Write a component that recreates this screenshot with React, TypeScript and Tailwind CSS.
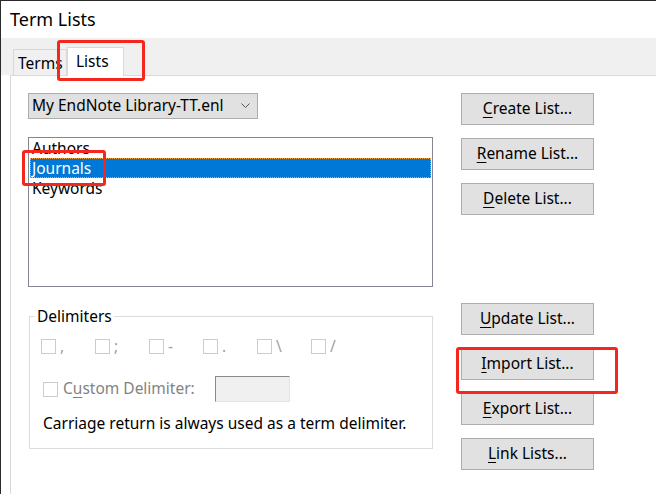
import React from "react";

const delimiters = [",", ";", "-", ".", "\\", "/"];

const topButtons = [
  { key: "C", rest: "reate List..." },
  { key: "R", rest: "ename List..." },
  { key: "D", rest: "elete List..." },
];

const bottomButtons = [
  { key: "U", rest: "pdate List..." },
  { key: "I", rest: "mport List..." },
  { key: "E", rest: "xport List..." },
  { key: "L", rest: "ink Lists..." },
];

function WinButton({ label }: { label: { key: string; rest: string } }) {
  return (
    <button className="w-[133px] h-[32px] bg-[#e1e1e1] border border-[#adadad] flex items-center justify-center text-[15.5px] text-black leading-none">
      <span>
        <u className="underline-offset-[3px]">{label.key}</u>
        {label.rest}
      </span>
    </button>
  );
}

function Checkbox() {
  return <div className="w-[15px] h-[15px] border border-[#cccccc] bg-white shrink-0" />;
}

export default function App() {
  return (
    <div className="relative w-[656px] h-[494px] overflow-hidden bg-white border-t border-l border-[#2b2b2b] flex flex-col font-['Noto_Sans',sans-serif] text-black">
      {/* Title bar */}
      <div className="h-[37px] flex items-center pl-[9px] text-[18px] shrink-0">Term Lists</div>

      {/* Tab strip */}
      <div className="h-[37px] bg-[#f0f0f0] flex items-end pl-[12px] shrink-0">
        <div className="w-[54px] h-[26px] overflow-hidden whitespace-nowrap border border-b-0 border-[#d9d9d9] bg-[#f0f0f0] pl-[4px] pt-[2px] text-[15.5px] flex items-center">
          Terms
        </div>
        <div className="relative z-10 -mb-px w-[57px] h-[29px] border border-b-0 border-[#d9d9d9] bg-white pl-[8px] text-[15.5px] flex items-center">
          Lists
        </div>
      </div>

      {/* Tab panel */}
      <div className="flex-1 ml-[9px] border-t border-l border-[#d9d9d9] flex pl-[17px] pt-[17px]">
        {/* Left column */}
        <div className="w-[405px] flex flex-col">
          <div className="w-[230px] h-[26px] bg-[#e1e1e1] border border-[#adadad] flex items-center pl-[3px] pr-[7px] text-[15.5px]">
            <span className="flex-1">My EndNote Library-TT.enl</span>
            <svg width="9" height="6" viewBox="0 0 9 6">
              <polyline points="0.5,0.5 4.5,4.5 8.5,0.5" fill="none" stroke="#555" strokeWidth="1" />
            </svg>
          </div>

          <div className="mt-[18px] h-[150px] border border-[#828790] px-px text-[15.5px] leading-[20px]">
            <div className="h-[20px] pl-[2px]">Authors</div>
            <div className="h-[20px] pl-[1px] bg-[#0078d7] text-white border border-dotted border-[#f0a040] leading-[18px]">
              Journals
            </div>
            <div className="h-[20px] pl-[2px]">Keywords</div>
          </div>

          <fieldset className="mt-[19px] ml-px w-[404px] border border-[#dcdcdc] pb-[15px]">
            <legend className="ml-[5px] px-[2px] text-[15.5px] leading-[20px]">Delimiters</legend>
            <div className="flex pl-[11px] pt-[13px]">
              {delimiters.map((d) => (
                <div key={d} className="w-[54px] flex items-center gap-[4px] text-[15.5px] leading-[15px] text-[#a0a0a0]">
                  <Checkbox />
                  <span>{d}</span>
                </div>
              ))}
            </div>
            <div className="flex items-center pl-[13px] mt-[22px] h-[26px]">
              <Checkbox />
              <span className="ml-[5px] w-[152px] text-[15.5px] text-[#838383]">
                C<u className="underline-offset-[3px]">u</u>stom Delimiter:
              </span>
              <div className="w-[75px] h-[26px] bg-[#f0f0f0] border border-t-[#8a8a8a] border-l-[#8a8a8a] border-r-[#e3e3e3] border-b-[#e3e3e3]" />
            </div>
            <div className="mt-[11px] pl-[13px] text-[15.5px] leading-[20px]">
              Carriage return is always used as a term delimiter.
            </div>
          </fieldset>
        </div>

        {/* Right column */}
        <div className="ml-[28px] flex flex-col">
          <div className="flex flex-col gap-[13px]">
            {topButtons.map((b) => (
              <WinButton key={b.key} label={b} />
            ))}
          </div>
          <div className="mt-[88px] flex flex-col gap-[13px]">
            {bottomButtons.map((b) => (
              <WinButton key={b.key} label={b} />
            ))}
          </div>
        </div>
      </div>

      {/* Red annotation boxes */}
      <div className="absolute left-[56px] top-[39px] w-[88px] h-[41px] border-[3px] border-[#f5261e] rounded-[3px] z-20" />
      <div className="absolute left-[21px] top-[149px] w-[84px] h-[36px] border-[3px] border-[#f5261e] rounded-[3px] z-20" />
      <div className="absolute left-[455px] top-[346px] w-[162px] h-[47px] border-[3px] border-[#f5261e] rounded-[3px] z-20" />
    </div>
  );
}
